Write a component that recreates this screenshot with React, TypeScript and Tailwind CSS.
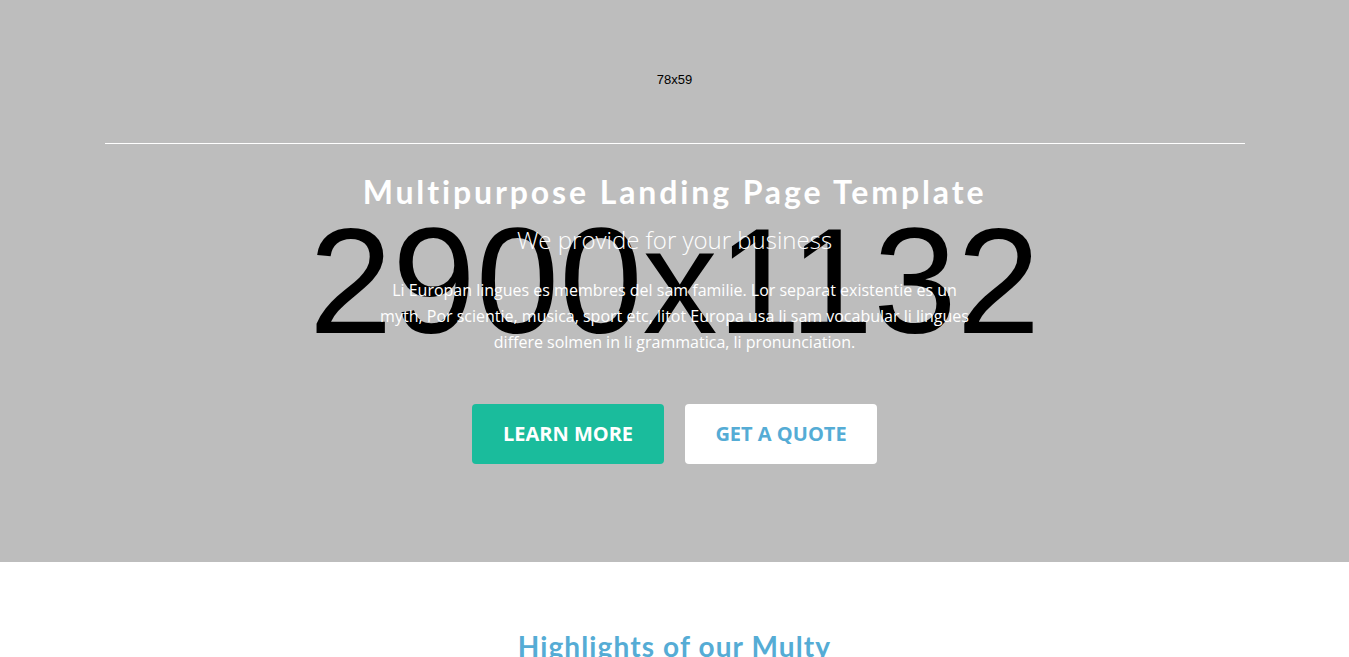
export default function App() {
  return (
    <div className="min-h-screen bg-white font-['Open_Sans',sans-serif]">
      {/* Hero */}
      <section className="relative h-[562px] overflow-hidden bg-[#bdbdbd]">
        {/* placeholder background label */}
        <div className="pointer-events-none absolute inset-0 flex items-center justify-center">
          <span className="font-['Liberation_Sans',Arial,sans-serif] text-[150px] leading-none text-black">
            2900x1132
          </span>
        </div>

        <div className="relative mx-auto max-w-[1140px]">
          <header className="flex h-[144px] justify-center border-b border-white pt-[50px]">
            <div className="flex h-[59px] w-[78px] items-center justify-center bg-[#bdbdbd] font-['Liberation_Sans',Arial,sans-serif] text-[13px] text-black">
              78x59
            </div>
          </header>

          <div className="flex flex-col items-center pt-[26px] text-center text-white">
            <h1 className="font-['Lato',sans-serif] text-[32px] leading-[44px] font-bold tracking-[0.09em]">
              Multipurpose Landing Page Template
            </h1>
            <h2 className="mt-[9px] text-[24px] leading-[34px] font-light">
              We provide for your business
            </h2>
            <p className="mt-[20px] w-[600px] text-[16px] leading-[26px]">
              Li Europan lingues es membres del sam familie. Lor separat existentie es un
              myth, Por scientie, musica, sport etc, litot Europa usa li sam vocabular li lingues
              differe solmen in li grammatica, li pronunciation.
            </p>
            <div className="mt-[49px] flex gap-[21px]">
              <button className="h-[60px] w-[192px] rounded-[4px] bg-[#1abc9c] text-[20px] font-bold text-white">
                LEARN MORE
              </button>
              <button className="h-[60px] w-[192px] rounded-[4px] bg-white text-[20px] font-bold text-[#55acd5]">
                GET A QUOTE
              </button>
            </div>
          </div>
        </div>
      </section>

      {/* Highlights */}
      <section className="bg-white pt-[66px] text-center">
        <h2 className="font-['Lato',sans-serif] text-[28px] leading-[36px] font-bold tracking-[0.04em] text-[#55acd5]">
          Highlights of our Multy
        </h2>
      </section>
    </div>
  );
}
